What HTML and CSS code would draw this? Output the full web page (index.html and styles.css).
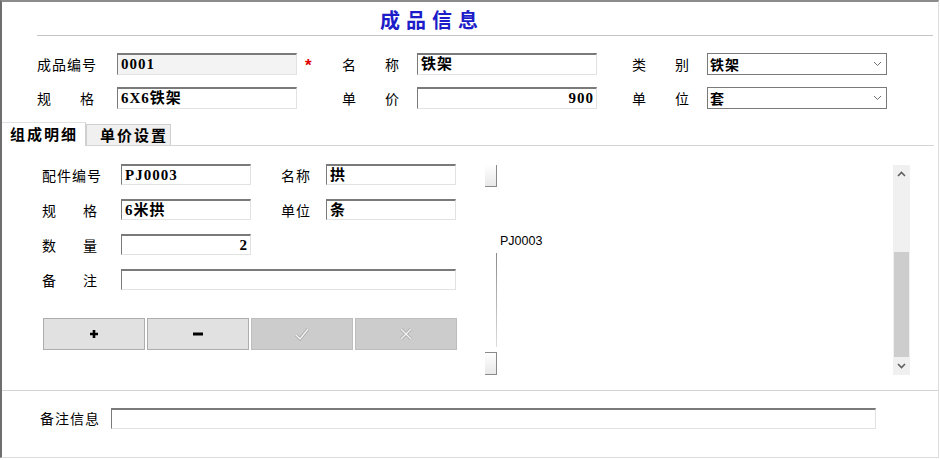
FILE: index.html
```html
<!DOCTYPE html>
<html lang="zh-CN">
<head>
<meta charset="utf-8">
<title>成品信息</title>
<link rel="stylesheet" href="styles.css">
</head>
<body>
<div class="window">
  <div class="header"><span class="title">成品信息</span></div>

  <div class="form">
    <div class="row">
      <div class="lbl">成品编号</div>
      <div class="fld ro">0001</div>
      <div class="req">*</div>
      <div class="lbl just"><span>名</span><span>称</span></div>
      <div class="fld">铁架</div>
      <div class="spacer"></div>
      <div class="lbl just"><span>类</span><span>别</span></div>
      <div class="sel"><span>铁架</span><svg class="chev" width="9" height="6" viewBox="0 0 9 6"><polyline points="1,1 4.5,4.5 8,1" fill="none" stroke="#707070" stroke-width="1"/></svg></div>
    </div>
    <div class="row">
      <div class="lbl just"><span>规</span><span>格</span></div>
      <div class="fld">6X6铁架</div>
      <div class="req"></div>
      <div class="lbl just"><span>单</span><span>价</span></div>
      <div class="fld num">900</div>
      <div class="spacer"></div>
      <div class="lbl just"><span>单</span><span>位</span></div>
      <div class="sel"><span>套</span><svg class="chev" width="9" height="6" viewBox="0 0 9 6"><polyline points="1,1 4.5,4.5 8,1" fill="none" stroke="#707070" stroke-width="1"/></svg></div>
    </div>
  </div>

  <div class="tabs">
    <div class="tab active">组成明细</div>
    <div class="tab">单价设置</div>
  </div>

  <div class="panel">
    <div class="detail">
      <div class="prow">
        <div class="plbl">配件编号</div>
        <div class="fld pf">PJ0003</div>
        <div class="plbl2">名称</div>
        <div class="fld pf">拱</div>
      </div>
      <div class="prow">
        <div class="plbl just"><span>规</span><span>格</span></div>
        <div class="fld pf">6米拱</div>
        <div class="plbl2">单位</div>
        <div class="fld pf">条</div>
      </div>
      <div class="prow">
        <div class="plbl just"><span>数</span><span>量</span></div>
        <div class="fld pf num">2</div>
      </div>
      <div class="prow">
        <div class="plbl just"><span>备</span><span>注</span></div>
        <div class="fld pwide"></div>
      </div>
      <div class="btns">
        <div class="btn"><svg width="12" height="12" viewBox="0 0 12 12"><path d="M6 2 V10 M2 6 H10" stroke="#000" stroke-width="2.6"/></svg></div>
        <div class="btn"><svg width="12" height="12" viewBox="0 0 12 12"><path d="M1 6 H11" stroke="#000" stroke-width="3"/></svg></div>
        <div class="btn off"><svg width="16" height="14" viewBox="0 0 16 14"><polyline points="2,8 6,12 14,2" fill="none" stroke="#a9a9a9" stroke-width="3"/><polyline points="2,8 6,12 14,2" fill="none" stroke="#f4f4f4" stroke-width="1.4"/></svg></div>
        <div class="btn off"><svg width="14" height="14" viewBox="0 0 14 14"><path d="M2 2 L12 12 M12 2 L2 12" fill="none" stroke="#a9a9a9" stroke-width="3"/><path d="M2 2 L12 12 M12 2 L2 12" fill="none" stroke="#f4f4f4" stroke-width="1.4"/></svg></div>
      </div>
    </div>

    <div class="side">
      <div class="strip">
        <div class="navtop"></div>
        <div class="navtxt">PJ0003</div>
        <div class="navline"></div>
        <div class="navbot"></div>
      </div>
      <div class="scroll">
        <div class="sbtn"><svg width="9" height="6" viewBox="0 0 9 6"><polyline points="1,5 4.5,1.5 8,5" fill="none" stroke="#606060" stroke-width="1.6"/></svg></div>
        <div class="track"><div class="thumb"></div></div>
        <div class="sbtn down"><svg width="9" height="6" viewBox="0 0 9 6"><polyline points="1,1 4.5,4.5 8,1" fill="none" stroke="#606060" stroke-width="1.6"/></svg></div>
      </div>
    </div>
  </div>

  <div class="memo">
    <div class="mlbl">备注信息</div>
    <div class="fld mfld"></div>
  </div>
</div>
</body>
</html>
```

FILE: styles.css
```css
* { box-sizing: border-box; }

body {
  margin: 0;
  background: #ffffff;
  font-family: "Noto Sans CJK SC", sans-serif;
  font-size: 14px;
  color: #000;
}

.window {
  width: 939px;
  height: 458px;
  border-left: 2px solid #6e6e6e;
  border-top: 2px solid #8c8c8c;
  border-right: 1px solid #dcdcdc;
  border-bottom: 1px solid #dcdcdc;
  display: flex;
  flex-direction: column;
}

.header {
  height: 34px;
  margin: 0 5px 0 35px;
  border-bottom: 1px solid #c4c4c4;
  padding: 5px 0 0 343px;
  flex-shrink: 0;
}

.title {
  font-size: 20px;
  font-weight: bold;
  letter-spacing: 6px;
  line-height: 26px;
  color: #1c1cc8;
}

.form {
  margin: 17px 0 0 35px;
  display: flex;
  flex-direction: column;
  gap: 12px;
  flex-shrink: 0;
}

.row {
  display: flex;
  align-items: center;
  height: 22px;
}

.lbl {
  width: 60px;
  margin-right: 20px;
  letter-spacing: 1px;
  line-height: 20px;
  white-space: nowrap;
  flex-shrink: 0;
}

.row .lbl.just {
  margin-right: 15px;
}

.row .lbl:first-child {
  margin-right: 20px;
}

.just {
  display: flex;
  justify-content: space-between;
  padding-right: 3px;
  letter-spacing: 0;
}

.fld {
  width: 180px;
  height: 22px;
  border-top: 2px solid #7a7a7a;
  border-left: 1px solid #7a7a7a;
  border-right: 1px solid #e2e2e2;
  border-bottom: 1px solid #e2e2e2;
  background: #fff;
  padding: 0 3px 0 3px;
  font-family: "Liberation Serif", "Noto Sans CJK SC", serif;
  font-weight: bold;
  font-size: 15px;
  letter-spacing: 1px;
  line-height: 18px;
  white-space: nowrap;
  overflow: hidden;
  flex-shrink: 0;
}

.fld.ro { background: #f3f3f3; }
.fld.num { text-align: right; padding-right: 2px; }

.req {
  width: 45px;
  padding-left: 8px;
  color: #e00000;
  font-family: "Liberation Sans", sans-serif;
  font-weight: bold;
  font-size: 17px;
  line-height: 20px;
  padding-top: 4px;
  flex-shrink: 0;
}

.spacer { width: 35px; flex-shrink: 0; }

.sel {
  width: 180px;
  height: 22px;
  border: 1px solid #7a7a7a;
  background: #fff;
  display: flex;
  align-items: center;
  justify-content: space-between;
  padding: 0 4px 0 2px;
  font-weight: bold;
  font-size: 14px;
  letter-spacing: 1px;
  flex-shrink: 0;
}

.chev { display: block; }

.tabs {
  margin-top: 13px;
  height: 24px;
  border-bottom: 1px solid #d4d4d4;
  margin-right: 4px;
  display: flex;
  align-items: flex-end;
  flex-shrink: 0;
}

.tab {
  height: 21px;
  width: 85px;
  background: #f0f0f0;
  border: 1px solid #cfcfcf;
  border-bottom: none;
  padding-left: 13px;
  font-weight: bold;
  font-size: 15px;
  letter-spacing: 2px;
  line-height: 20px;
  white-space: nowrap;
}

.tab.active {
  height: 24px;
  width: 84px;
  margin-bottom: -1px;
  background: #fff;
  border-left: none;
  border-top: 1px solid #e2e2e2;
  border-right: 1px solid #cfcfcf;
  padding-left: 8px;
  line-height: 22px;
}

.panel {
  height: 245px;
  border-bottom: 1px solid #d4d4d4;
  display: flex;
  flex-shrink: 0;
}

.detail {
  padding: 18px 0 0 40px;
  display: flex;
  flex-direction: column;
  gap: 14px;
  flex-shrink: 0;
}

.prow {
  display: flex;
  align-items: center;
  height: 21px;
}

.plbl {
  width: 58px;
  margin-right: 21px;
  letter-spacing: 1px;
  line-height: 20px;
  white-space: nowrap;
  flex-shrink: 0;
}

.plbl.just { letter-spacing: 0; }

.plbl2 {
  width: 30px;
  margin: 0 15px 0 30px;
  letter-spacing: 1px;
  white-space: nowrap;
  flex-shrink: 0;
}

.pf { width: 130px; height: 21px; }
.pwide { width: 335px; height: 21px; }

.btns {
  margin: 14px 0 0 1px;
  display: flex;
  gap: 2px;
}

.btn {
  width: 102px;
  height: 32px;
  border: 1px solid #adadad;
  background: #e1e1e1;
  display: flex;
  align-items: center;
  justify-content: center;
}

.btn.off {
  background: #cccccc;
  border-color: #bdbdbd;
}

.btn svg { display: block; }

.side {
  margin: 19px 0 0 28px;
  width: 425px;
  height: 210px;
  display: flex;
  justify-content: space-between;
}

.strip {
  width: 80px;
  display: flex;
  flex-direction: column;
}

.navtop {
  width: 12px;
  height: 22px;
  border-right: 1px solid #8a8a8a;
  border-bottom: 1px solid #8a8a8a;
  background: linear-gradient(#ffffff, #e8e8e8);
  flex-shrink: 0;
}

.navtxt {
  margin-top: 47px;
  padding-left: 15px;
  font-family: "Liberation Sans", sans-serif;
  font-size: 12.5px;
  line-height: 15px;
  white-space: nowrap;
}

.navline {
  margin: 4px 0 0 11px;
  width: 1px;
  height: 94px;
  background: linear-gradient(#8a8a8a, #dddddd);
  flex-shrink: 0;
}

.navbot {
  margin-top: 5px;
  width: 12px;
  height: 23px;
  border-top: 1px solid #8a8a8a;
  border-right: 1px solid #8a8a8a;
  border-bottom: 1px solid #8a8a8a;
  background: linear-gradient(#ffffff, #e8e8e8);
  flex-shrink: 0;
}

.scroll {
  width: 17px;
  height: 210px;
  background: #f0f0f0;
  display: flex;
  flex-direction: column;
}

.sbtn {
  height: 17px;
  display: flex;
  align-items: center;
  justify-content: center;
  flex-shrink: 0;
}

.sbtn.down { height: 18px; }

.track {
  flex: 1;
  padding-top: 70px;
  display: flex;
  flex-direction: column;
}

.thumb {
  flex: 1;
  background: #cdcdcd;
  margin: 0 1px;
}

.memo {
  flex: 1;
  padding: 17px 0 0 38px;
  display: flex;
  align-items: flex-start;
}

.mlbl {
  width: 58px;
  margin-right: 13px;
  letter-spacing: 1px;
  line-height: 21px;
  white-space: nowrap;
}

.mfld { width: 765px; height: 21px; }
```
